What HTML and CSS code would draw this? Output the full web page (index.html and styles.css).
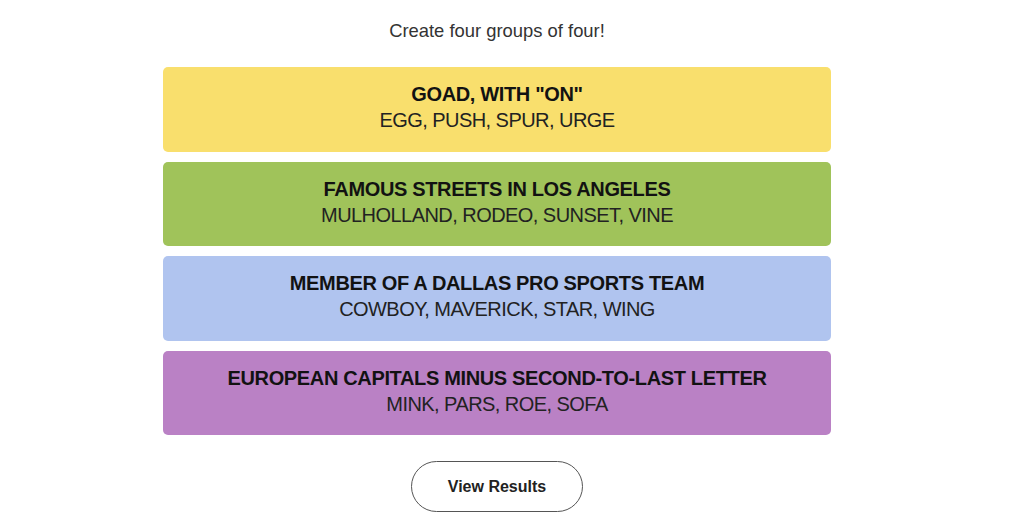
FILE: index.html
```html
<!DOCTYPE html>
<html lang="en">
<head>
    <meta charset="UTF-8">
    <meta name="viewport" content="width=device-width, initial-scale=1.0">
    <title>Connections - Solved</title>
    <link rel="stylesheet" href="styles.css">
</head>
<body>
    <div class="page">
        <p class="prompt">Create four groups of four!</p>

        <div class="groups">
            <div class="group yellow">
                <h3 class="group-title">GOAD, WITH "ON"</h3>
                <p class="group-words">EGG, PUSH, SPUR, URGE</p>
            </div>
            <div class="group green">
                <h3 class="group-title">FAMOUS STREETS IN LOS ANGELES</h3>
                <p class="group-words">MULHOLLAND, RODEO, SUNSET, VINE</p>
            </div>
            <div class="group blue">
                <h3 class="group-title">MEMBER OF A DALLAS PRO SPORTS TEAM</h3>
                <p class="group-words">COWBOY, MAVERICK, STAR, WING</p>
            </div>
            <div class="group purple">
                <h3 class="group-title">EUROPEAN CAPITALS MINUS SECOND-TO-LAST LETTER</h3>
                <p class="group-words">MINK, PARS, ROE, SOFA</p>
            </div>
        </div>

        <button class="results-btn">View Results</button>
    </div>
</body>
</html>
```

FILE: styles.css
```css
body {
    margin: 0;
    background: #fff;
    font-family: "Liberation Sans", Arial, sans-serif;
    color: #121212;
}

.page {
    width: 994px;
    display: flex;
    flex-direction: column;
    align-items: center;
}

.prompt {
    margin: 20px 0 0;
    font-size: 18.4px;
    line-height: 22px;
    color: #333;
}

.groups {
    margin-top: 25px;
    width: 668px;
    display: flex;
    flex-direction: column;
    gap: 10px;
}

.group {
    height: 84.5px;
    box-sizing: border-box;
    padding-bottom: 4px;
    border-radius: 5px;
    display: flex;
    flex-direction: column;
    justify-content: center;
    align-items: center;
    text-align: center;
}

.yellow { background: #f9df6d; }
.green { background: #a0c35a; }
.blue { background: #b0c4ef; }
.purple { background: #ba81c5; }

.group-title {
    margin: 0;
    font-size: 20px;
    line-height: 26px;
    font-weight: 700;
    letter-spacing: -0.35px;
}

.group-words {
    margin: 0;
    font-size: 20px;
    line-height: 26px;
    letter-spacing: -0.55px;
    color: #222;
}

.results-btn {
    margin-top: 26px;
    width: 172px;
    height: 51px;
    border: 1.5px solid #555;
    border-radius: 26px;
    background: #fff;
    font-family: "Liberation Sans", Arial, sans-serif;
    font-size: 16px;
    font-weight: 700;
    color: #222;
    cursor: pointer;
}
```
